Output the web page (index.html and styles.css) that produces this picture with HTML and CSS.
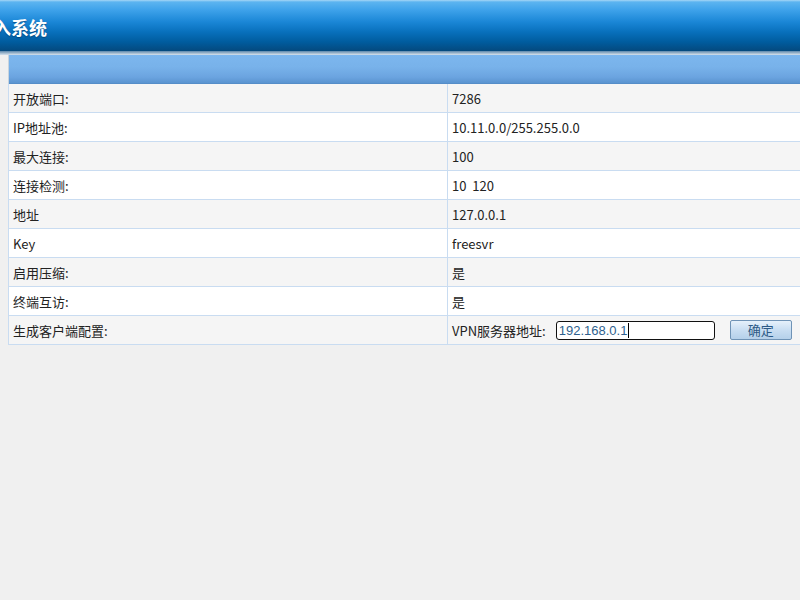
FILE: index.html
```html
<!DOCTYPE html>
<html>
<head>
<meta charset="utf-8">
<link rel="stylesheet" href="styles.css">
</head>
<body>
<div class="header"><h1 class="title">登入系统</h1></div>
<div class="strip"></div>
<div class="main">
  <div class="bar"></div>
  <table class="grid">
    <tr class="odd"><td class="k">开放端口:</td><td class="v">7286</td></tr>
    <tr><td class="k">IP地址池:</td><td class="v">10.11.0.0/255.255.0.0</td></tr>
    <tr class="odd"><td class="k">最大连接:</td><td class="v">100</td></tr>
    <tr><td class="k">连接检测:</td><td class="v">10&nbsp;&nbsp;120</td></tr>
    <tr class="odd"><td class="k">地址</td><td class="v">127.0.0.1</td></tr>
    <tr><td class="k">Key</td><td class="v">freesvr</td></tr>
    <tr class="odd"><td class="k">启用压缩:</td><td class="v">是</td></tr>
    <tr><td class="k">终端互访:</td><td class="v">是</td></tr>
    <tr class="odd"><td class="k">生成客户端配置:</td><td class="v"><div class="cfg"><span>VPN服务器地址:</span><span class="input">192.168.0.1<i class="caret"></i></span><span class="btn">确定</span></div></td></tr>
  </table>
</div>
</body>
</html>
```
FILE: styles.css
```css
html, body { margin: 0; padding: 0; }
body {
  background: #f0f0f0;
  font-family: "Noto Sans CJK SC", "Microsoft YaHei", sans-serif;
  font-size: 13px;
  color: #222;
  width: 800px;
  height: 600px;
  overflow: hidden;
}
.header {
  height: 51px;
  background: linear-gradient(to bottom, #a6d6f6 0px, #5cb4f0 2px, #3ea2ea 10px, #1a86d6 22px, #0870bc 32px, #005c9e 42px, #04497e 51px);
  overflow: hidden;
}
.title {
  margin: 0 0 0 -25px;
  padding-top: 15px;
  font-size: 18px;
  line-height: 24px;
  font-weight: bold;
  color: #fff;
  text-shadow: 0 1px 1px rgba(0,40,80,0.5);
}
.strip {
  height: 4px;
  background: linear-gradient(to bottom, #5a86ac, #9cb6cc 2px, #d6e2ee);
}
.main {
  padding-left: 8px;
}
.bar {
  height: 29px;
  border-left: 1px solid #c8d4de;
  background: linear-gradient(to bottom, #7cb6ee 0px, #78b2ea 12px, #6ba4e0 22px, #5a94d0 28px, #4f86c0 29px);
}
.grid {
  width: 792px;
  border-collapse: collapse;
  table-layout: fixed;
}
.grid td {
  height: 28px;
  padding: 0 0 0 4px;
  border-top: 1px solid #c9dcf1;
  border-bottom: 1px solid #c9dcf1;
  vertical-align: middle;
  white-space: nowrap;
}
.grid tr:first-child td { border-top: none; }
.grid td.k { width: 434px; border-left: 1px solid #c9dcf1; border-right: 1px solid #c9dcf1; }
.grid tr { background: #ffffff; }
.grid tr.odd { background: #f5f5f5; }
.cfg {
  display: flex;
  align-items: center;
}
.input {
  display: inline-flex;
  align-items: center;
  margin-left: 10px;
  width: 155px;
  height: 17px;
  padding-left: 2px;
  border: 1px solid #111;
  border-radius: 3px;
  background: #fff;
  font-family: "Liberation Sans", Arial, sans-serif;
  font-size: 13px;
  color: #2e5f8e;
}
.caret {
  display: inline-block;
  width: 1px;
  height: 15px;
  background: #000;
  margin-left: 1px;
}
.btn {
  margin-left: 15px;
  width: 60px;
  height: 18px;
  line-height: 18px;
  text-align: center;
  border: 1px solid #6f93b6;
  border-radius: 2px;
  background: linear-gradient(to bottom, #e6f1fb, #c9def2 50%, #b5d0ea);
  color: #2d5a86;
  font-size: 13px;
}
```
